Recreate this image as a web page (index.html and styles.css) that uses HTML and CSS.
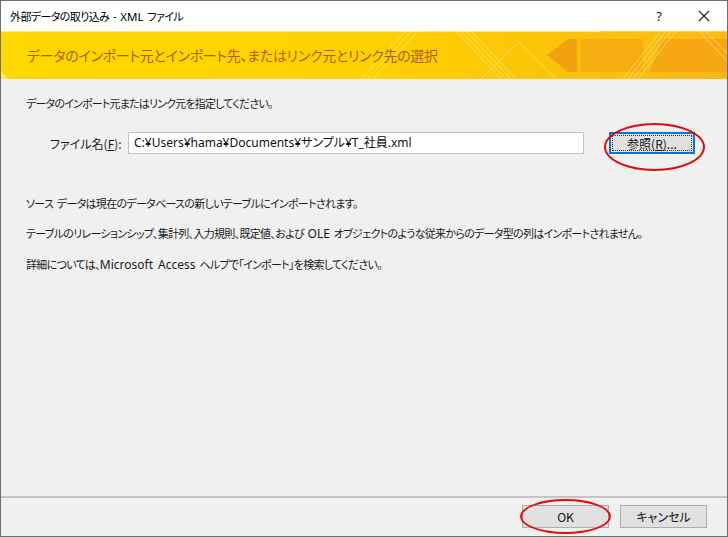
FILE: index.html
```html
<!DOCTYPE html>
<html lang="ja">
<head>
<meta charset="utf-8">
<title>外部データの取り込み - XML ファイル</title>
<link rel="stylesheet" href="styles.css">
</head>
<body>
<div class="window">
  <div class="titlebar">
    <span class="title">外部データの取り込み - <span class="lat">XML</span> ファイル</span>
    <span class="tb-help">?</span>
    <span class="tb-close">
      <svg width="12" height="12" viewBox="0 0 12 12"><path d="M1 1 L11 11 M11 1 L1 11" stroke="#1a1a1a" stroke-width="1.1" fill="none"/></svg>
    </span>
  </div>
  <div class="banner">
    <svg class="banner-art" width="726" height="48" viewBox="0 0 726 48" preserveAspectRatio="none">
      <defs>
        <linearGradient id="bg" x1="0" y1="0" x2="1" y2="0">
          <stop offset="0" stop-color="#ffd800"/>
          <stop offset="0.5" stop-color="#ffd200"/>
          <stop offset="0.75" stop-color="#fcc408"/>
          <stop offset="1" stop-color="#f9b715"/>
        </linearGradient>
      </defs>
      <rect x="0" y="0" width="726" height="48" fill="url(#bg)"/>
      <rect x="0" y="0" width="726" height="1" fill="#fde98a"/>
      <polygon points="0,40 8,48 0,48" fill="#fff0a0" opacity="0.6"/>
      <polygon points="600,0 726,0 726,8 592,8" fill="#fbc010" opacity="0.6"/>
      <polygon points="546,24 567,8 576,8 576,41 567,41" fill="#f29d12" opacity="0.9"/>
      <rect x="580" y="8" width="62" height="33" fill="#f6a814" opacity="0.75"/>
      <polygon points="662,8 726,8 726,41 648,41" fill="#f5a214" opacity="0.8"/>
      <g stroke="#fff3b0" stroke-width="1" opacity="0.55">
        <line x1="360" y1="48" x2="405" y2="0"/>
        <line x1="366" y1="48" x2="411" y2="0"/>
        <line x1="372" y1="48" x2="417" y2="0"/>
        <line x1="455" y1="0" x2="500" y2="48"/>
        <line x1="460" y1="0" x2="505" y2="48"/>
        <line x1="465" y1="0" x2="510" y2="48"/>
        <line x1="470" y1="0" x2="515" y2="48"/>
        <line x1="480" y1="48" x2="518" y2="11"/>
        <line x1="518" y1="11" x2="555" y2="48"/>
        <line x1="622" y1="48" x2="660" y2="0"/>
        <line x1="627" y1="48" x2="665" y2="0"/>
        <line x1="632" y1="48" x2="670" y2="0"/>
        <line x1="637" y1="48" x2="675" y2="0"/>
        <line x1="698" y1="0" x2="726" y2="30"/>
        <line x1="704" y1="0" x2="726" y2="22"/>
      </g>
    </svg>
    <span class="banner-text">データのインポート元とインポート先、またはリンク元とリンク先の選択</span>
  </div>
  <div class="content">
    <p class="intro">データのインポート元またはリンク元を指定してください。</p>
    <div class="file-row">
      <label class="file-label">ファイル名(<u>F</u>):</label>
      <div class="file-input">C:¥Users¥hama¥Documents¥サンプル¥T_社員.xml</div>
      <div class="browse-wrap">
        <button class="btn btn-focus"><span class="focus-ring">参照(<u>R</u>)...</span></button>
        <span class="ellipse ellipse-browse"></span>
      </div>
    </div>
    <div class="notes">
      <p>ソース データは現在のデータベースの新しいテーブルにインポートされます。</p>
      <p>テーブルのリレーションシップ、集計列、入力規則、既定値、および <span class="lat">OLE</span> オブジェクトのような従来からのデータ型の列はインポートされません。</p>
      <p>詳細については、<span class="lat">Microsoft Access</span> ヘルプで「インポート」を検索してください。</p>
    </div>
  </div>
  <div class="footer">
    <div class="ok-wrap">
      <button class="btn btn-footer">OK</button>
      <span class="ellipse ellipse-ok"></span>
    </div>
    <button class="btn btn-footer">キャンセル</button>
  </div>
</div>
</body>
</html>
```

FILE: styles.css
```css
* { box-sizing: border-box; }
html, body { margin: 0; padding: 0; background: #ffffff; }
body {
  font-family: "Noto Sans CJK JP", "Noto Sans", sans-serif;
  font-size: 11px;
  letter-spacing: -0.7px;
  word-spacing: 2px;
  color: #1a1a1a;
  font-feature-settings: "palt";
}
.lat {
  font-family: "Noto Sans", "Noto Sans CJK JP", sans-serif;
  font-size: 12px;
  letter-spacing: 0;
}
.window {
  width: 728px;
  height: 537px;
  border: 1px solid #6e6e6e;
  display: flex;
  flex-direction: column;
  background: #f0f0f0;
}
.titlebar {
  height: 30px;
  background: #ffffff;
  display: flex;
  align-items: center;
  padding-left: 9px;
  flex: none;
}
.title { flex: 1; font-size: 11px; letter-spacing: -0.6px; color: #000; }
.title .lat { font-size: 11.5px; }
.tb-help {
  width: 14px;
  text-align: center;
  margin-right: 32px;
  font-size: 13px;
  letter-spacing: 0;
  color: #1a1a1a;
  font-family: "Noto Sans", sans-serif;
}
.tb-close { width: 12px; height: 12px; margin-right: 17px; display: flex; }
.banner {
  position: relative;
  height: 48px;
  flex: none;
  display: flex;
  align-items: center;
  padding-left: 26px;
  overflow: hidden;
}
.banner-art { position: absolute; left: 0; top: 0; }
.banner-text {
  position: relative;
  font-size: 14px;
  color: #b45a06;
  letter-spacing: -0.3px;
}
.content {
  flex: 1;
  padding: 14px 0 0 25px;
}
.intro { margin: 0; line-height: 20px; letter-spacing: -0.8px; }
.file-row {
  display: flex;
  align-items: center;
  margin-top: 19px;
  margin-left: 24px;
  height: 22px;
}
.file-label { width: 78px; flex: none; font-size: 12px; letter-spacing: 0; }
.file-input {
  width: 456px;
  height: 22px;
  flex: none;
  background: #ffffff;
  border: 1px solid #c4c4c4;
  padding-left: 5px;
  line-height: 20px;
  font-family: "Noto Sans", "Noto Sans CJK JP", sans-serif;
  font-size: 12px;
  letter-spacing: 0;
  word-spacing: 0;
  color: #111;
}
.browse-wrap { position: relative; margin-left: 25px; }
.btn {
  font-family: "Noto Sans CJK JP", "Noto Sans", sans-serif;
  font-feature-settings: "palt";
  font-size: 12px;
  letter-spacing: 0;
  color: #111;
  background: #e1e1e1;
  border: 1px solid #adadad;
  padding: 0;
  display: flex;
  align-items: center;
  justify-content: center;
}
.btn-focus {
  width: 86px;
  height: 22px;
  border: 2px solid #0078d7;
  padding: 1px;
}
.focus-ring {
  display: flex;
  align-items: center;
  justify-content: center;
  width: 100%;
  height: 100%;
  border: 1px dotted #333;
}
.notes { margin-top: 39px; display: flex; flex-direction: column; gap: 10px; }
.notes p { margin: 0; line-height: 20px; }
.footer {
  height: 40px;
  flex: none;
  border-top: 2px solid #c3c3c3;
  display: flex;
  justify-content: flex-end;
  align-items: flex-start;
  padding: 7px 20px 0 0;
  gap: 11px;
}
.ok-wrap { position: relative; }
.btn-footer { width: 87px; height: 23px; }
.ellipse {
  position: absolute;
  border: 2px solid #e30b0b;
  border-radius: 50%;
  pointer-events: none;
}
.ellipse-browse { left: -5px; top: -9px; width: 101px; height: 48px; }
.ellipse-ok { left: -2px; top: -6px; width: 91px; height: 35px; }
```
